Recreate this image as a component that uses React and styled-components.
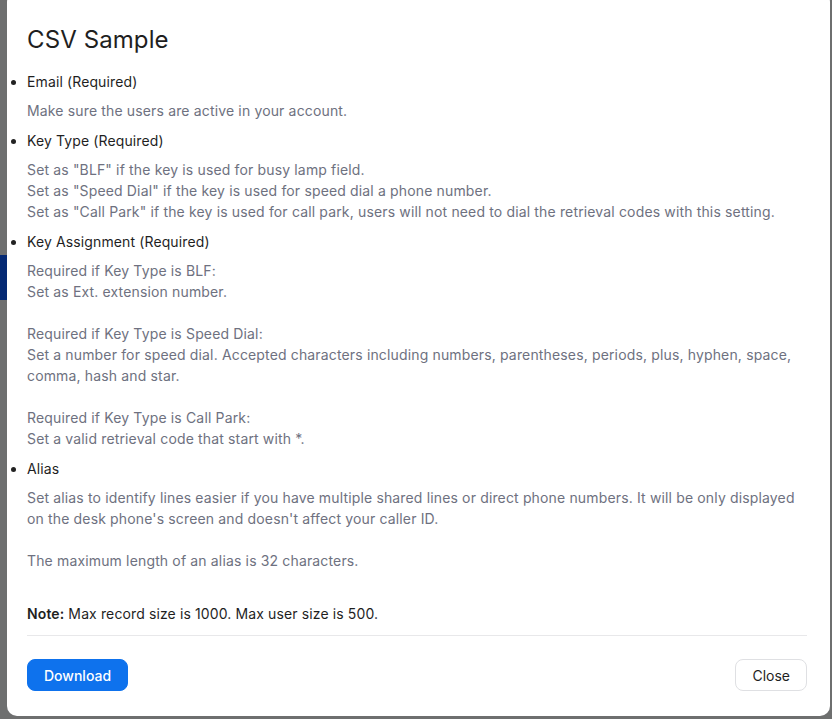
import React from 'react';
import styled, { createGlobalStyle } from 'styled-components';

const GlobalStyle = createGlobalStyle`
	html, body {
		margin: 0;
		padding: 0;
		height: 100%;
		overflow: hidden;
		font-family: Inter, "Liberation Sans", Arial, sans-serif;
	}
`;

const Page = styled.div`
	width: 100vw;
	height: 100vh;
	background: #f4f5f7;
	display: flex;
	flex-direction: column;
	padding-top: 255px;
	box-sizing: border-box;
`;

const SideItem = styled.div`
	width: 60px;
	height: 45px;
	background: #0b5cff;
`;

const Overlay = styled.div`
	position: fixed;
	inset: 0;
	background-color: rgba(0, 0, 0, 0.55);
`;

const ModalBox = styled.div`
	position: fixed;
	top: -8px;
	left: 7px;
	width: 823px;
	height: 724px;
	box-sizing: border-box;
	background: #fff;
	border-radius: 10px;
	padding: 32px 23px 24px 20px;
	display: flex;
	flex-direction: column;
	color: #222;
`;

const Title = styled.h2`
	margin: 0 0 16px;
	font-size: 24px;
	line-height: 32px;
	font-weight: 400;
	color: #1f1f1f;
	letter-spacing: 0.1px;
`;

const List = styled.ul`
	margin: 0;
	padding: 0;
	list-style: disc outside;
`;

const Item = styled.li`
	margin: 0 0 ${(p) => p.$gap ?? 10}px;
	&::marker {
		font-size: 14px;
	}
`;

const Label = styled.div`
	font-size: 14px;
	line-height: 20px;
	color: #1f1f1f;
	letter-spacing: 0.12px;
`;

const Desc = styled.div`
	margin-top: 8px;
	font-size: 14px;
	line-height: 21px;
	color: #6e7180;
	letter-spacing: 0.15px;
`;

const Note = styled.p`
	margin: 33px 0 11px;
	font-size: 14px;
	line-height: 20px;
	color: #1f1f1f;
	letter-spacing: 0.12px;
	b {
		font-weight: 600;
	}
`;

const Divider = styled.hr`
	margin: 0;
	border: 0;
	border-top: 1px solid #e8e8ea;
`;

const Footer = styled.div`
	margin-top: 23px;
	display: flex;
	justify-content: space-between;
	align-items: center;
`;

const Button = styled.button`
	height: 32px;
	padding: 0 16px;
	border-radius: 8px;
	font-family: inherit;
	font-size: 14px;
	cursor: pointer;
	border: 1px solid ${(p) => (p.$primary ? '#0e72ed' : '#dfe0e3')};
	background: ${(p) => (p.$primary ? '#0e72ed' : '#fff')};
	color: ${(p) => (p.$primary ? '#fff' : '#1f1f1f')};
	font-weight: ${(p) => (p.$primary ? 500 : 400)};
`;

export default function App() {
	return (
		<>
			<GlobalStyle />
			<Page>
				<SideItem />
			</Page>
			<Overlay />
			<ModalBox>
				<Title>CSV Sample</Title>
				<List>
					<Item>
						<Label>Email (Required)</Label>
						<Desc>Make sure the users are active in your account.</Desc>
					</Item>
					<Item>
						<Label>Key Type (Required)</Label>
						<Desc>
							Set as "BLF" if the key is used for busy lamp field.<br />
							Set as "Speed Dial" if the key is used for speed dial a phone number.<br />
							Set as "Call Park" if the key is used for call park, users will not need to dial the retrieval codes with this setting.
						</Desc>
					</Item>
					<Item>
						<Label>Key Assignment (Required)</Label>
						<Desc>
							Required if Key Type is BLF:<br />
							Set as Ext. extension number.<br />
							<br />
							Required if Key Type is Speed Dial:<br />
							Set a number for speed dial. Accepted characters including numbers, parentheses, periods, plus, hyphen, space, comma, hash and star.<br />
							<br />
							Required if Key Type is Call Park:<br />
							Set a valid retrieval code that start with *.
						</Desc>
					</Item>
					<Item $gap={0}>
						<Label>Alias</Label>
						<Desc>
							Set alias to identify lines easier if you have multiple shared lines or direct phone numbers. It will be only displayed on the desk phone's screen and doesn't affect your caller ID.<br />
							<br />
							The maximum length of an alias is 32 characters.
						</Desc>
					</Item>
				</List>
				<Note>
					<b>Note:</b> Max record size is 1000. Max user size is 500.
				</Note>
				<Divider />
				<Footer>
					<Button $primary>Download</Button>
					<Button>Close</Button>
				</Footer>
			</ModalBox>
		</>
	);
}
